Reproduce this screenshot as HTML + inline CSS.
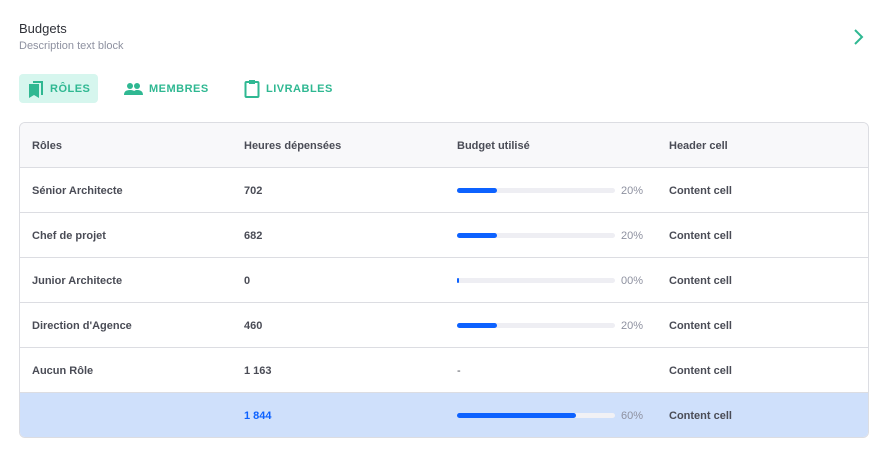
<!DOCTYPE html>
<html><head><meta charset="utf-8"><style>
*{margin:0;padding:0;box-sizing:border-box}
body{width:888px;height:457px;background:#fff;font-family:"Liberation Sans",sans-serif;position:relative;overflow:hidden}
.t{position:absolute;left:19px;top:21px;font-size:13px;color:#2f3138}
.d{position:absolute;left:19px;top:40px;font-size:11px;color:#8e91a0}
.chev{position:absolute;left:852px;top:28px}
.tab{position:absolute;top:74px;height:29px;display:flex;align-items:center;font-size:11px;font-weight:bold;letter-spacing:0.5px;color:#2fb892}
.tab svg{margin-right:6px}
.tbl{position:absolute;left:19px;top:122px;width:850px;height:316px;border:1px solid #dcdde2;border-radius:6px;overflow:hidden}
.row{position:absolute;left:0;width:100%;height:45px;border-top:1px solid #dcdde2;font-size:11px;color:#4a4c56;font-weight:bold}
.row span{position:absolute;top:17px}
.c1{left:12px}.c2{left:224px}.c3{left:437px}.c4{left:649px}
.bar{position:absolute;left:437px;top:20px;width:158px;height:5px;border-radius:3px;background:#eeeef3}
.bar i{display:block;height:5px;border-radius:3px;background:#0d62ff}
.p{left:601px;font-weight:normal;color:#8e91a0}
</style></head><body>
<div class="t">Budgets</div>
<div class="d">Description text block</div>
<svg class="chev" width="14" height="18" viewBox="0 0 14 18"><path d="M3 2l7 7-7 7" fill="none" stroke="#2fb892" stroke-width="2"/></svg>
<div class="tab" style="left:19px;width:79px;background:#d6f6ee;border-radius:4px;padding-left:9px"><svg width="16" height="18" viewBox="0 0 16 18"><path d="M5 1h10v14h-2V3H5z" fill="#2fb892"/><path d="M1 4h10v14l-5-3-5 3z" fill="#2fb892"/></svg>RÔLES</div>
<div class="tab" style="left:124px"><svg width="19" height="14" viewBox="0 0 19 14"><circle cx="6" cy="4" r="3" fill="#2fb892"/><circle cx="13" cy="4" r="3" fill="#2fb892"/><path d="M0 13c0-4 3-5 6-5s6 1 6 5zM9 13c0-4 2-5 4-5 3 0 6 1 6 5z" fill="#2fb892"/></svg>MEMBRES</div>
<div class="tab" style="left:244px"><svg width="16" height="19" viewBox="0 0 16 19"><rect x="1.5" y="3" width="13" height="15" rx="1" fill="none" stroke="#2fb892" stroke-width="2"/><rect x="5" y="1" width="6" height="4" fill="#2fb892"/></svg>LIVRABLES</div>
<div class="tbl">
<div class="row" style="top:0;border-top:none;background:#f8f8fa"><span class="c1">Rôles</span><span class="c2">Heures dépensées</span><span class="c3">Budget utilisé</span><span class="c4">Header cell</span></div>
<div class="row" style="top:44px"><span class="c1">Sénior Architecte</span><span class="c2">702</span><div class="bar"><i style="width:40px"></i></div><span class="p">20%</span><span class="c4">Content cell</span></div>
<div class="row" style="top:89px"><span class="c1">Chef de projet</span><span class="c2">682</span><div class="bar"><i style="width:40px"></i></div><span class="p">20%</span><span class="c4">Content cell</span></div>
<div class="row" style="top:134px"><span class="c1">Junior Architecte</span><span class="c2">0</span><div class="bar"><i style="width:2px"></i></div><span class="p">00%</span><span class="c4">Content cell</span></div>
<div class="row" style="top:179px"><span class="c1">Direction d'Agence</span><span class="c2">460</span><div class="bar"><i style="width:40px"></i></div><span class="p">20%</span><span class="c4">Content cell</span></div>
<div class="row" style="top:224px"><span class="c1">Aucun Rôle</span><span class="c2">1 163</span><span class="c3" style="font-weight:normal">-</span><span class="c4">Content cell</span></div>
<div class="row" style="top:269px;height:47px;background:#cfe0fb"><span class="c2" style="color:#0d62ff">1 844</span><div class="bar" style="background:#f1f1f5"><i style="width:119px"></i></div><span class="p">60%</span><span class="c4">Content cell</span></div>
</div>
</body></html>
